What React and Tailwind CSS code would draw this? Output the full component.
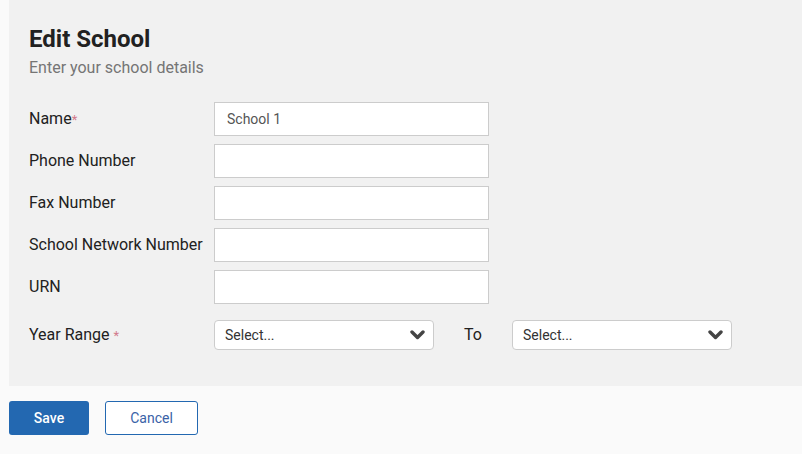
import React from "react";

const font = { fontFamily: "Roboto, 'Noto Sans', sans-serif" };

function Row({ label, required, value }) {
  return (
    <div className="flex items-center h-[34px]">
      <div className="w-[185px] text-[16px] text-[#212121]">
        {label}
        {required && <span className="text-[#d27a8c] text-[13px]">*</span>}
      </div>
      <div className="w-[275px] h-[34px] bg-white border border-[#cccccc] flex items-center px-[12px] text-[14px] text-[#555]">
        {value}
      </div>
    </div>
  );
}

function Chevron() {
  return (
    <svg width="15" height="10" viewBox="0 0 15 10" fill="none">
      <polyline points="2,2 7.5,7.5 13,2" stroke="#444" strokeWidth="3.4" strokeLinecap="round" strokeLinejoin="round" />
    </svg>
  );
}

function Select() {
  return (
    <div className="w-[220px] h-[30px] bg-white border border-[#cccccc] rounded-[4px] flex items-center justify-between pl-[10px] pr-[8px] text-[14px] text-[#333]">
      <span>Select...</span>
      <Chevron />
    </div>
  );
}

export default function App() {
  return (
    <div className="w-[802px] h-[454px] bg-[#fafafa]" style={font}>
      <div className="ml-[9px] bg-[#f1f1f1] pl-[20px] pt-[23px] pb-[36px]">
        <h1 className="text-[24px] leading-[32px] font-bold text-[#212121]">Edit School</h1>
        <p className="mt-[1px] text-[16px] leading-[24px] text-[#757575]">Enter your school details</p>
        <div className="mt-[22px] flex flex-col gap-[8px]">
          <Row label="Name" required value="School 1" />
          <Row label="Phone Number" />
          <Row label="Fax Number" />
          <Row label="School Network Number" />
          <Row label="URN" />
        </div>
        <div className="mt-[16px] flex items-center h-[30px]">
          <div className="w-[185px] text-[16px] text-[#212121]">
            Year Range <span className="text-[#d27a8c] text-[13px]">*</span>
          </div>
          <Select />
          <div className="w-[78px] pl-[30px] text-[16px] text-[#212121]">To</div>
          <Select />
        </div>
      </div>
      <div className="flex gap-[16px] ml-[9px] mt-[15px]">
        <button className="w-[80px] h-[34px] bg-[#2368b1] text-white text-[14px] font-medium rounded-[3px]">Save</button>
        <button className="w-[93px] h-[34px] bg-white border border-[#2368b1] text-[#3a62a7] text-[14px] rounded-[3px]">Cancel</button>
      </div>
    </div>
  );
}
